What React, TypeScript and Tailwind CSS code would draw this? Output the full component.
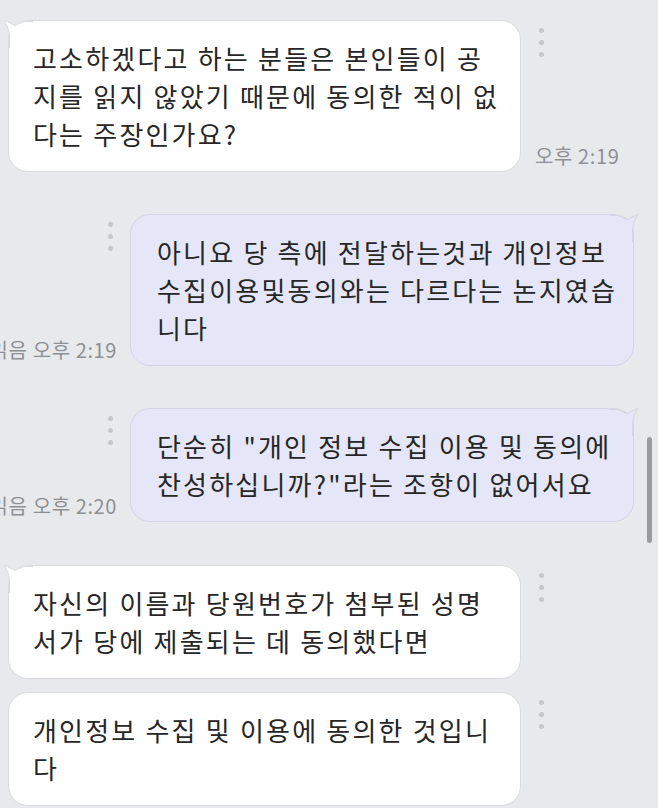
import React from 'react';

const Dots: React.FC = () => (
  <div className="flex flex-col gap-[7px] pt-[8px]">
    <span className="block h-[5px] w-[5px] rounded-full bg-[#c6c7cb]" />
    <span className="block h-[5px] w-[5px] rounded-full bg-[#c6c7cb]" />
    <span className="block h-[5px] w-[5px] rounded-full bg-[#c6c7cb]" />
  </div>
);

// small horn on the top corner of the first bubble in a group
const TailLeft: React.FC = () => (
  <svg className="absolute -left-[6px] -top-[3px]" width="30" height="30" viewBox="0 0 30 30">
    <path d="M1 2 L12 7 L21 3 L30 3 L30 30 L6 30 L6 17 Q5.5 8 1 2 Z" fill="#ffffff" />
    <path d="M30 3.5 L21 3.5 L12 7.5 L1 2 Q5.5 8 6.5 17 L6.5 30" fill="none" stroke="#dadbdf" strokeWidth="1" />
  </svg>
);

const TailRight: React.FC = () => (
  <svg className="absolute -right-[6px] -top-[3px]" width="30" height="30" viewBox="0 0 30 30">
    <path d="M29 2 L18 7 L9 3 L0 3 L0 30 L24 30 L24 17 Q24.5 8 29 2 Z" fill="#e5e6f7" />
    <path d="M0 3.5 L9 3.5 L18 7.5 L29 2 Q24.5 8 23.5 17 L23.5 30" fill="none" stroke="#d3d5e4" strokeWidth="1" />
  </svg>
);

interface MsgProps {
  lines: string[];
  time?: string;
  tail?: boolean;
  className?: string;
}

const LeftMsg: React.FC<MsgProps> = ({ lines, time, tail, className }) => (
  <div className={`flex pl-[8px] ${className ?? ''}`}>
    <div className="relative w-[513px] shrink-0 rounded-[20px] border border-[#dadbdf] bg-white px-[24px] py-[18px] text-[26px] leading-[38px] tracking-[2.2px] text-[#262626]">
      {tail && <TailLeft />}
      {lines.map((l, i) => (
        <div key={i} className="whitespace-nowrap">{l}</div>
      ))}
    </div>
    <div className="ml-[14px] flex shrink-0 flex-col justify-between">
      <div className="pl-[4px]">
        <Dots />
      </div>
      {time && <div className="whitespace-nowrap pb-[5px] text-[20px] leading-[22px] tracking-[0.6px] text-[#8e8f94]">{time}</div>}
    </div>
  </div>
);

const RightMsg: React.FC<MsgProps> = ({ lines, time, tail, className }) => (
  <div className={`flex justify-end pr-[24px] ${className ?? ''}`}>
    <div className="mr-[13px] flex shrink-0 flex-col items-end justify-between">
      <div className="pr-[4px]">
        <Dots />
      </div>
      {time && <div className="whitespace-nowrap pb-[5px] text-[20px] leading-[22px] tracking-[0.6px] text-[#8e8f94]">{time}</div>}
    </div>
    <div className="relative w-[504px] shrink-0 rounded-[20px] border border-[#d3d5e4] bg-[#e5e6f7] px-[26px] py-[18px] text-[26px] leading-[38px] tracking-[2.2px] text-[#262626]">
      {tail && <TailRight />}
      {lines.map((l, i) => (
        <div key={i} className="whitespace-nowrap">{l}</div>
      ))}
    </div>
  </div>
);

export default function App() {
  return (
    <div className="relative h-[808px] w-[658px] overflow-hidden bg-[#e8e9ed] pt-[20px] font-['Noto_Sans_CJK_KR','Noto_Sans',sans-serif]">
      <LeftMsg
        tail
        lines={['고소하겠다고 하는 분들은 본인들이 공', '지를 읽지 않았기 때문에 동의한 적이 없', '다는 주장인가요?']}
        time="오후 2:19"
      />
      <RightMsg
        tail
        className="mt-[42px]"
        lines={['아니요 당 측에 전달하는것과 개인정보', '수집이용및동의와는 다르다는 논지였습', '니다']}
        time="읽음 오후 2:19"
      />
      <RightMsg
        tail
        className="mt-[42px]"
        lines={['단순히 "개인 정보 수집 이용 및 동의에', '찬성하십니까?"라는 조항이 없어서요']}
        time="읽음 오후 2:20"
      />
      <LeftMsg
        tail
        className="mt-[43px]"
        lines={['자신의 이름과 당원번호가 첨부된 성명', '서가 당에 제출되는 데 동의했다면']}
      />
      <LeftMsg
        className="mt-[13px]"
        lines={['개인정보 수집 및 이용에 동의한 것입니', '다']}
      />

      {/* scrollbar thumb */}
      <div className="absolute left-[647px] top-[437px] h-[106px] w-[5px] rounded-full bg-[#9b9b9d]" />
    </div>
  );
}
